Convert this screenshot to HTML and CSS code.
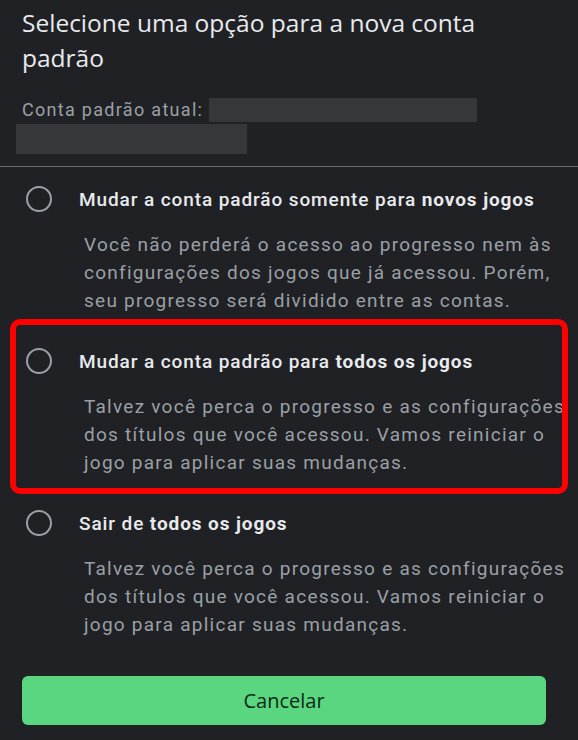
FILE: index.html
```html
<html>
<head>
<meta http-equiv="Content-Type" content="text/html; charset=UTF-8">
<title>Conta padrão</title>
<link rel="stylesheet" href="styles.css">
</head>
<body>
<div class="dialog">
	<div class="head">
		<h1 class="title">Selecione uma opção para a nova conta padrão</h1>
		<p class="current">Conta padrão atual: <span class="redact wide"></span></p>
		<div class="redact second"></div>
	</div>
	<div class="divider"></div>
	<div class="options">
		<div class="option">
			<div class="row"><span class="radio"></span><span class="label">Mudar a conta padrão somente para <b>novos jogos</b></span></div>
			<p class="desc">Você não perderá o acesso ao progresso nem às configurações dos jogos que já acessou. Porém, seu progresso será dividido entre as contas.</p>
		</div>
		<div class="option marked">
			<div class="row"><span class="radio"></span><span class="label">Mudar a conta padrão para <b>todos os jogos</b></span></div>
			<p class="desc">Talvez você perca o progresso e as configurações dos títulos que você acessou. Vamos reiniciar o jogo para aplicar suas mudanças.</p>
		</div>
		<div class="option">
			<div class="row"><span class="radio"></span><span class="label">Sair de <b>todos os jogos</b></span></div>
			<p class="desc">Talvez você perca o progresso e as configurações dos títulos que você acessou. Vamos reiniciar o jogo para aplicar suas mudanças.</p>
		</div>
	</div>
	<div class="actions"><button class="cancel">Cancelar</button></div>
</div>
</body>
</html>
```

FILE: styles.css
```css
html, body{
	margin: 0;
	padding: 0;
	background: #202124;
}

body{
	font-family: Roboto, "Liberation Sans", sans-serif;
	color: #e8eaed;
}

.dialog{
	width: 578px;
	height: 740px;
	overflow: hidden;
}

.head{
	padding: 5px 22px 0 22px;
}

h1.title{
	margin: 0;
	font-family: "Open Sans", Roboto, sans-serif;
	font-size: 24.5px;
	line-height: 35px;
	font-weight: 400;
	color: #e8eaed;
	width: 500px;
}

p.current{
	margin: 22px 0 0 0;
	font-size: 18px;
	line-height: 26px;
	color: #9aa0a6;
	letter-spacing: 1.3px;
}

.redact{
	background: #36373b;
}

.redact.wide{
	display: inline-block;
	width: 268px;
	height: 24px;
	vertical-align: -6px;
	margin-left: 0;
}

.redact.second{
	width: 231px;
	height: 30px;
	margin: 1px 0 0 -6px;
}

.divider{
	height: 1px;
	background: #686b70;
	margin-top: 12px;
}

.options{
	padding-top: 2px;
}

.option{
	position: relative;
	padding: 16px 0;
}

.option.marked::after{
	content: "";
	position: absolute;
	top: -12px;
	bottom: -1px;
	left: 10px;
	right: 10px;
	border: 6px solid #ff0000;
	border-radius: 10px;
}

.row{
	display: flex;
	align-items: center;
	height: 28px;
}

.radio{
	width: 22px;
	height: 22px;
	border: 2px solid #9aa0a6;
	border-radius: 50%;
	margin-left: 26px;
	margin-right: 27px;
	flex: none;
}

.label{
	font-size: 19px;
	font-weight: 500;
	letter-spacing: 0.9px;
}

.label b{
	font-weight: 700;
}

p.desc{
	margin: 18px 0 0 84px;
	font-size: 19px;
	line-height: 28px;
	color: #9aa0a6;
	letter-spacing: 1.25px;
	width: 488px;
}

.actions{
	padding: 21px 32px 0 22px;
}

button.cancel{
	display: block;
	width: 100%;
	height: 49px;
	border: none;
	border-radius: 6px;
	background: #5bd680;
	color: #0d2a16;
	font-family: "Open Sans", Roboto, sans-serif;
	font-size: 20px;
	font-weight: 400;
}
```
